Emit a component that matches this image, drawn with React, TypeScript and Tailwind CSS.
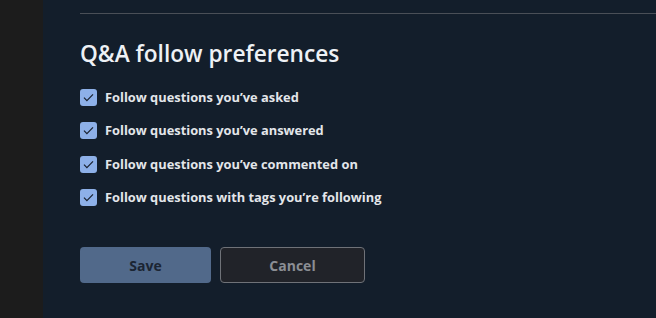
import React from "react";

const items = [
  "Follow questions you\u2019ve asked",
  "Follow questions you\u2019ve answered",
  "Follow questions you\u2019ve commented on",
  "Follow questions with tags you\u2019re following",
];

function Check() {
  return (
    <span className="flex h-[17px] w-[17px] shrink-0 items-center justify-center rounded-[3px] bg-[#8db0e8]">
      <svg width="11" height="9" viewBox="0 0 11 9" fill="none">
        <path d="M1 4.6 L3.9 7.6 L10 1.3" stroke="#1a2230" strokeWidth="1.2" />
      </svg>
    </span>
  );
}

export default function App() {
  return (
    <div className="flex h-[318px] w-[656px] overflow-hidden bg-[#131e2b]" style={{ fontFamily: '"Open Sans", "Noto Sans", sans-serif' }}>
      <div className="w-[43px] shrink-0 bg-[#1c1c1c]" />
      <div className="flex-1 pl-[37px]">
        <div className="mt-[13px] h-px bg-[#4a4f57]" />
        <h2 className="mt-[25px] text-[22.7px] font-semibold leading-[30px] text-[#eef1f5]">Q&amp;A follow preferences</h2>
        <div className="mt-[20px] flex flex-col gap-[16.4px]">
          {items.map((t) => (
            <label key={t} className="flex h-[17px] items-center gap-[8px]">
              <Check />
              <span className="text-[12.85px] font-bold text-[#e3e6ea]">{t}</span>
            </label>
          ))}
        </div>
        <div className="mt-[41px] flex gap-[9px]">
          <button className="h-[36px] w-[131px] rounded-[4px] bg-[#51698a] text-[14px] font-bold text-[#1b2533]">Save</button>
          <button className="h-[36px] w-[145px] rounded-[4px] border border-[#6f7278] bg-[#212329] text-[14px] font-bold text-[#8b8e94]">Cancel</button>
        </div>
      </div>
    </div>
  );
}
